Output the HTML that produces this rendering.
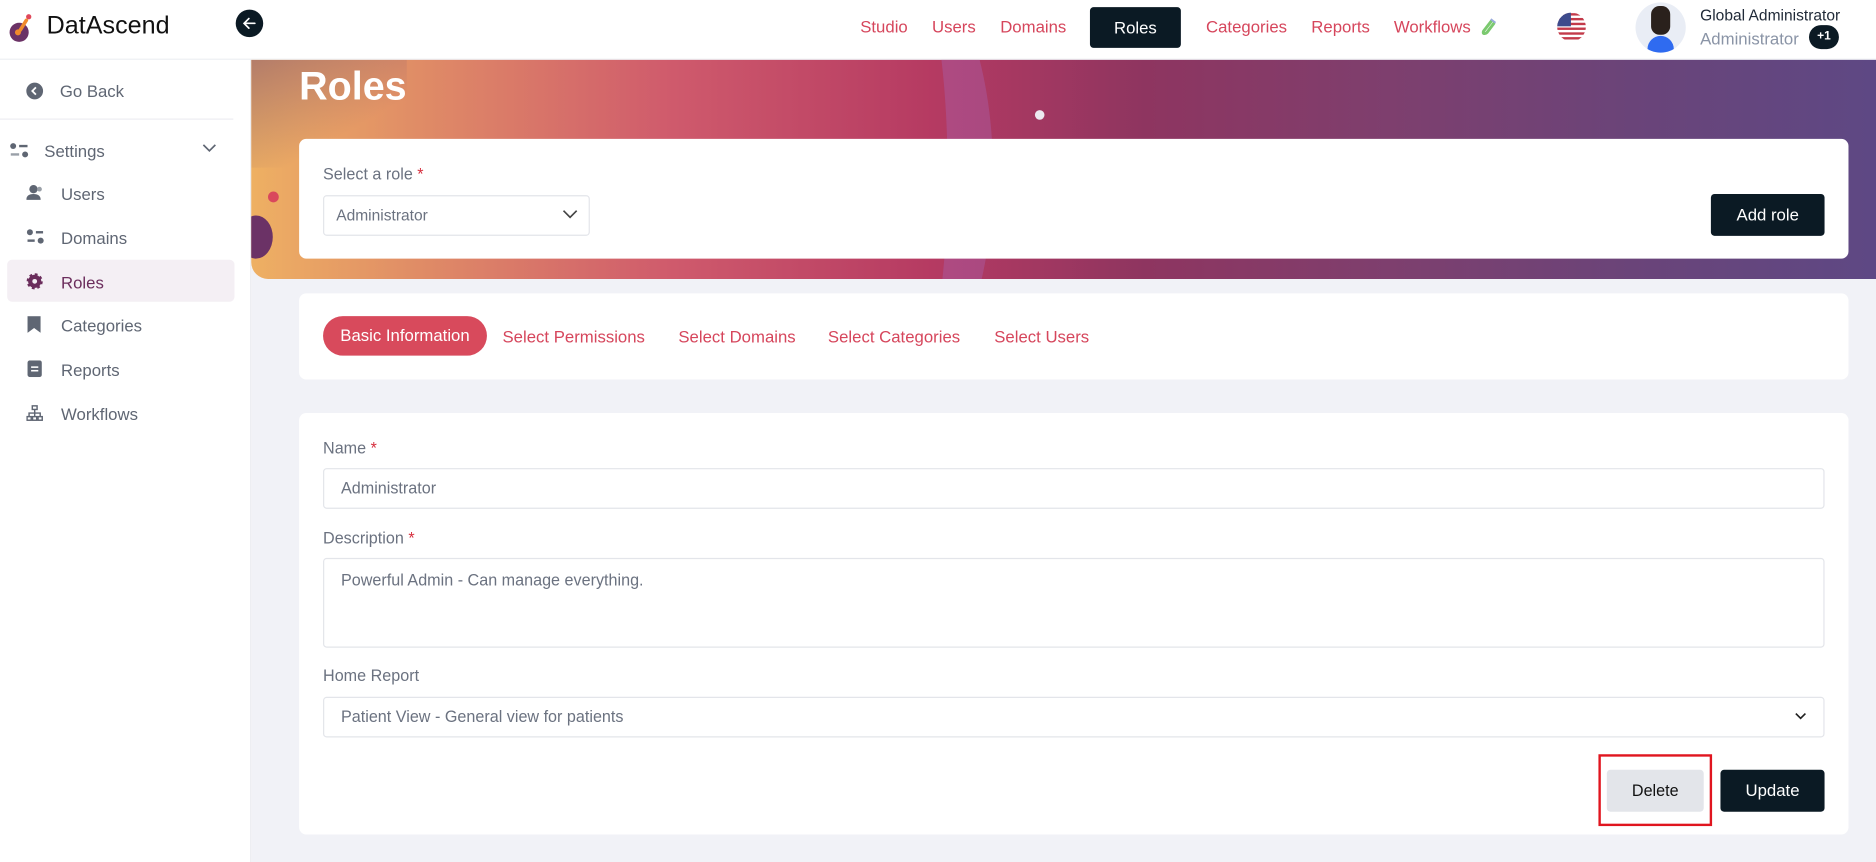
<!DOCTYPE html>
<html><head><meta charset="utf-8"><style>
*{box-sizing:border-box;margin:0;padding:0}
html,body{width:1876px;height:862px;overflow:hidden;background:#f1f2f7;font-family:"Liberation Sans",sans-serif}
#w{position:absolute;left:0;top:0;width:1568px;height:720px;transform-origin:0 0;transform:scale(1.19643,1.19722);background:#f1f2f7}
.a{position:absolute}
.nav{position:absolute;top:14px;font-size:14px;color:#d6465c}
.side{position:absolute;left:0;top:50px;width:210px;height:670px;background:#fff;border-right:1px solid #eceef2}
.si{position:absolute;left:51px;font-size:14px;color:#5f6673}
.card{position:absolute;left:250px;width:1295px;background:#fff;border-radius:6px}
.lbl{position:absolute;left:20px;font-size:13.5px;color:#6b7280}
.lbl b{color:#d6303f;font-weight:normal}
.inp{position:absolute;left:20px;width:1255px;border:1px solid #e3e5ea;border-radius:3px;font-size:13.5px;color:#6b7280;padding:0 14px}
.btn{position:absolute;background:#0b1a24;color:#fff;border-radius:3px;font-size:14px;text-align:center}
</style></head><body><div id="w">
<div class="a" style="left:0;top:0;width:1568px;height:50px;background:#fff;border-bottom:1px solid #eceef2"></div>
<svg class="a" style="left:6px;top:10px" width="24" height="26" viewBox="0 0 24 26"><circle cx="10" cy="17" r="8" fill="#6b3266"/><circle cx="18" cy="4" r="2.2" fill="#e0485a"/><path d="M16 7 L11 15" stroke="#f08a2c" stroke-width="3" stroke-linecap="round"/><circle cx="9" cy="17" r="2.5" fill="#f08a2c"/></svg>
<div class="a" style="left:39px;top:10px;font-size:21px;color:#111">DatAscend</div>
<div class="a" style="left:197px;top:8px;width:23px;height:23px;border-radius:50%;background:#0b1a24"></div>
<svg class="a" style="left:201px;top:12px" width="15" height="15" viewBox="0 0 15 15"><path d="M12 7.5H3.5M7 3.5L3 7.5L7 11.5" stroke="#fff" stroke-width="1.4" fill="none" stroke-linecap="round"/></svg>
<div class="nav" style="left:719px">Studio</div>
<div class="nav" style="left:779px">Users</div>
<div class="nav" style="left:836px">Domains</div>
<div class="btn" style="left:911px;top:6px;width:76px;height:34px;line-height:34px">Roles</div>
<div class="nav" style="left:1008px">Categories</div>
<div class="nav" style="left:1096px">Reports</div>
<div class="nav" style="left:1165px">Workflows</div>
<svg class="a" style="left:1237px;top:15px" width="14" height="15" viewBox="0 0 14 15"><path d="M10 2 L3 11 Q2 13 4 13 Q5 13 6 12 L12 4" stroke="#7bc96f" stroke-width="2.5" fill="none"/><path d="M9 1 L13 4" stroke="#9ad" stroke-width="1.5"/></svg>
<svg class="a" style="left:1301px;top:10px" width="25" height="25" viewBox="0 0 25 25"><defs><clipPath id="c"><circle cx="12.5" cy="12.5" r="12"/></clipPath></defs><g clip-path="url(#c)"><rect width="25" height="25" fill="#fff"/><rect y="1" width="25" height="2" fill="#c33a4a"/><rect y="5" width="25" height="2" fill="#c33a4a"/><rect y="9" width="25" height="2" fill="#c33a4a"/><rect y="13" width="25" height="2" fill="#c33a4a"/><rect y="17" width="25" height="2" fill="#c33a4a"/><rect y="21" width="25" height="2" fill="#c33a4a"/><rect width="12" height="12" fill="#3d4b8c"/></g></svg>
<div class="a" style="left:1367px;top:2px;width:42px;height:42px;border-radius:50%;background:#e9edf5;overflow:hidden">
<div class="a" style="left:10px;top:28px;width:22px;height:16px;border-radius:11px 11px 4px 4px;background:#2f6bf0"></div>
<div class="a" style="left:13px;top:3px;width:16px;height:24px;border-radius:7px;background:#2a211c"></div></div>
<div class="a" style="left:1421px;top:5px;font-size:13px;color:#1f2937">Global Administrator</div>
<div class="a" style="left:1421px;top:24px;font-size:14px;color:#8a94a6">Administrator</div>
<div class="a" style="left:1512px;top:21px;width:25px;height:20px;border-radius:10px;background:#0b1a24;color:#fff;font-size:10px;font-weight:bold;text-align:center;line-height:20px">+1</div>
<div class="side">
<div class="a" style="left:22px;top:19px;width:14px;height:14px;border-radius:50%;background:#5f6673"></div>
<svg class="a" style="left:25px;top:22px" width="8" height="8" viewBox="0 0 8 8"><path d="M5 1L2 4L5 7" stroke="#fff" stroke-width="1.5" fill="none"/></svg>
<div class="si" style="left:50px;top:18px">Go Back</div>
<div class="a" style="left:0;top:49px;width:195px;height:1px;background:#eceef2"></div>
<svg class="a" style="left:8px;top:69px" width="16" height="14" viewBox="0 0 16 14"><circle cx="3" cy="3" r="2.5" fill="#5f6673"/><rect x="8" y="2" width="7" height="2" fill="#5f6673"/><rect x="1" y="9" width="7" height="2" fill="#9aa0a8"/><circle cx="13" cy="10" r="2.5" fill="#5f6673"/></svg>
<div class="si" style="left:37px;top:68px">Settings</div>
<svg class="a" style="left:169px;top:70px" width="12" height="8" viewBox="0 0 12 8"><path d="M1 1L6 6L11 1" stroke="#5f6673" stroke-width="1.4" fill="none"/></svg>
<svg class="a" style="left:22px;top:104px" width="15" height="14" viewBox="0 0 15 14"><circle cx="6" cy="4" r="3.5" fill="#5f6673"/><path d="M0 13Q0 8 6 8Q12 8 12 13Z" fill="#5f6673"/><circle cx="11" cy="4" r="2" fill="#9aa0a8"/></svg>
<div class="si" style="top:104px">Users</div>
<svg class="a" style="left:22px;top:141px" width="15" height="14" viewBox="0 0 15 14"><circle cx="3" cy="3" r="2.5" fill="#5f6673"/><rect x="8" y="2" width="6" height="2" fill="#5f6673"/><rect x="1" y="9" width="6" height="2" fill="#5f6673"/><circle cx="12" cy="10" r="2.5" fill="#5f6673"/></svg>
<div class="si" style="top:141px">Domains</div>
<div class="a" style="left:6px;top:167px;width:190px;height:35px;border-radius:4px;background:#f4eff4"></div>
<svg class="a" style="left:22px;top:178px" width="14" height="14" viewBox="0 0 14 14"><circle cx="7" cy="7" r="5.5" fill="#6b2d5c" stroke="#6b2d5c" stroke-width="2.5" stroke-dasharray="2.2 2.1"/><circle cx="7" cy="7" r="2" fill="#f4eff4"/></svg>
<div class="si" style="top:178px;color:#6b2d5c">Roles</div>
<svg class="a" style="left:23px;top:214px" width="11" height="14" viewBox="0 0 11 14"><path d="M0 0H11V14L5.5 10L0 14Z" fill="#5f6673"/></svg>
<div class="si" style="top:214px">Categories</div>
<svg class="a" style="left:23px;top:251px" width="12" height="14" viewBox="0 0 12 14"><rect width="12" height="14" rx="2" fill="#5f6673"/><rect x="3" y="5" width="6" height="1.3" fill="#fff"/><rect x="3" y="8" width="6" height="1.3" fill="#fff"/></svg>
<div class="si" style="top:251px">Reports</div>
<svg class="a" style="left:22px;top:288px" width="14" height="14" viewBox="0 0 14 14" fill="none" stroke="#5f6673" stroke-width="1.2"><rect x="5" y="1" width="4" height="3"/><rect x="0.6" y="10" width="3.5" height="3"/><rect x="5.2" y="10" width="3.5" height="3"/><rect x="9.8" y="10" width="3.5" height="3"/><path d="M7 4V10M2.3 10V7H11.6V10"/></svg>
<div class="si" style="top:288px">Workflows</div>
</div>
<div class="a" style="left:210px;top:50px;width:1358px;height:183px;border-bottom-left-radius:14px;overflow:hidden;background:linear-gradient(90deg,#eeb063 0%,#e08d66 10%,#cf5a6c 26%,#b53a62 42%,#8e3560 55%,#7e3f6e 70%,#6a4479 85%,#5e4884 100%)">
<div class="a" style="left:0;top:0;width:130px;height:90px;background:linear-gradient(150deg,rgba(140,90,110,.6),rgba(140,90,110,0) 65%)"></div>
<div class="a" style="left:480px;top:-80px;width:140px;height:350px;border-radius:50%;border-right:38px solid rgba(170,90,160,.5)"></div>
<div class="a" style="left:-10px;top:130px;width:28px;height:36px;border-radius:50%;background:#6b3266"></div>
<div class="a" style="left:14px;top:110px;width:9px;height:9px;border-radius:50%;background:#d9485c"></div>
<div class="a" style="left:655px;top:42px;width:8px;height:8px;border-radius:50%;background:#ece9f0"></div>
</div>
<div class="a" style="left:250px;top:53px;font-size:33px;font-weight:bold;color:#fff">Roles</div>
<div class="card" style="top:116px;height:100px">
<div class="lbl" style="top:22px">Select a role <b>*</b></div>
<div class="inp" style="width:223px;top:47px;height:34px;line-height:32px;font-size:13px;padding-left:10px">Administrator</div>
<svg class="a" style="left:220px;top:59px" width="13" height="8" viewBox="0 0 13 8"><path d="M1 1L6.5 6.5L12 1" stroke="#444" stroke-width="1.4" fill="none"/></svg>
<div class="btn" style="left:1180px;top:46px;width:95px;height:35px;line-height:35px">Add role</div>
</div>
<div class="card" style="top:245px;height:72px">
<div class="a" style="left:20px;top:19px;width:137px;height:33px;border-radius:17px;background:#d84a5c;color:#fff;font-size:14px;text-align:center;line-height:33px">Basic Information</div>
<div class="nav" style="left:170px;top:28px">Select Permissions</div>
<div class="nav" style="left:317px;top:28px">Select Domains</div>
<div class="nav" style="left:442px;top:28px">Select Categories</div>
<div class="nav" style="left:581px;top:28px">Select Users</div>
</div>
<div class="card" style="top:345px;height:352px">
<div class="lbl" style="top:22px">Name <b>*</b></div>
<div class="inp" style="top:46px;height:34px;line-height:32px">Administrator</div>
<div class="lbl" style="top:97px">Description <b>*</b></div>
<div class="inp" style="top:121px;height:75px;padding-top:10px">Powerful Admin - Can manage everything.</div>
<div class="lbl" style="top:212px">Home Report</div>
<div class="inp" style="top:237px;height:34px;line-height:32px">Patient View - General view for patients</div>
<svg class="a" style="left:1250px;top:250px" width="10" height="7" viewBox="0 0 10 7"><path d="M1 1L5 5L9 1" stroke="#222" stroke-width="1.4" fill="none"/></svg>
<div class="a" style="left:1086px;top:285px;width:95px;height:60px;border:2px solid #e0151f"></div>
<div class="a" style="left:1093px;top:298px;width:81px;height:35px;border-radius:3px;background:#e3e5ea;color:#111;font-size:13.5px;text-align:center;line-height:35px">Delete</div>
<div class="btn" style="left:1188px;top:298px;width:87px;height:35px;line-height:35px">Update</div>
</div>
</div></body></html>
